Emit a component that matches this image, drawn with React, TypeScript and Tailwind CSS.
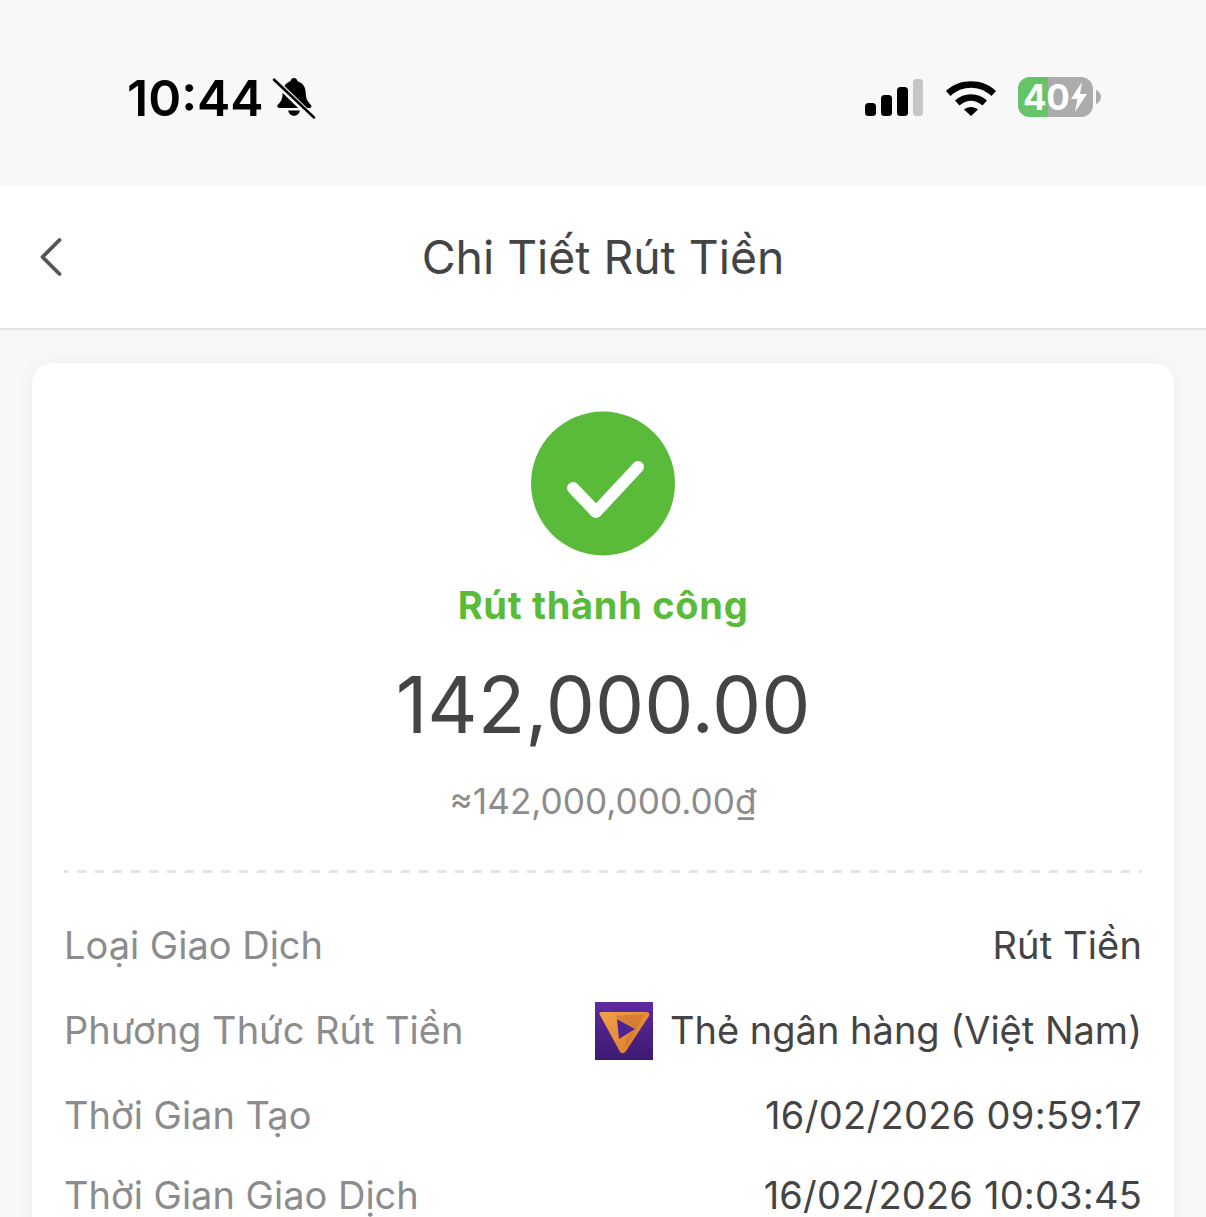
import React from 'react';
import { ChevronLeft } from 'lucide-react';

const rows = [
  { label: 'Loại Giao Dịch', value: 'Rút Tiền', height: 'h-[85px]', tracking: 'tracking-[0.15px]' },
  { label: 'Phương Thức Rút Tiền', value: 'Thẻ ngân hàng (Việt Nam)', logo: true, height: 'h-[85px]', tracking: 'tracking-normal' },
  { label: 'Thời Gian Tạo', value: '16/02/2026 09:59:17', height: 'h-[85px]', tracking: 'tracking-[0.3px]' },
  { label: 'Thời Gian Giao Dịch', value: '16/02/2026 10:03:45', height: 'h-[75px]', tracking: 'tracking-[0.2px]' },
];

const BellOff = () => (
  <svg width="44" height="44" viewBox="0 0 42 42" className="ml-[8px]">
    <path d="M21 2c2 0 3 1.300 3.400 3 5 1.500 7.600 5.600 7.800 11 .2 5 1 7.400 4.800 11.500 1 1.100 1 3-1 3H7c-2 0-2.400-2-1.400-3 3.400-3.400 4.400-6 4.600-11.500C10.400 10.600 13 6.500 17.600 5 18 3.300 19 2 21 2z" fill="#000" />
    <path d="M15.500 33h11c-.4 3-2.700 5-5.500 5s-5.100-2-5.500-5z" fill="#000" />
    <path d="M3 5l36 35" stroke="#f8f8f8" strokeWidth="6" />
    <path d="M2 3.500l38 36" stroke="#000" strokeWidth="2.600" strokeLinecap="round" />
  </svg>
);

const Signal = () => (
  <svg width="60" height="38" viewBox="0 0 60 38">
    <rect x="1" y="25" width="11" height="13" rx="3.500" fill="#000" />
    <rect x="17" y="17" width="11" height="21" rx="3.500" fill="#000" />
    <rect x="33" y="9" width="11" height="29" rx="3.500" fill="#000" />
    <rect x="49" y="1" width="10" height="37" rx="3.500" fill="#c6c6c6" />
  </svg>
);

const Wifi = () => (
  <svg width="52" height="38" viewBox="0 0 52 38">
    <path d="M1 13C14 0 38 0 51 13l-4.500 5C35 7 17 7 5.500 18z" fill="#000" />
    <path d="M10 22.500C19 14 33 14 42 22.500l-4.500 5C30.500 21 21.500 21 14.500 27.500z" fill="#000" />
    <path d="M19 31.500c4-3.500 10-3.500 14 0L26 38z" fill="#000" />
  </svg>
);

const Battery = () => (
  <div className="flex items-center">
    <div className="relative flex h-[40px] w-[75px] items-center overflow-hidden rounded-[12px] bg-[#acacac]">
      <div className="absolute inset-y-0 left-0 w-[30px] bg-[#65c466]" />
      <span className="relative ml-[5px] text-[35px] leading-none font-bold tracking-[-0.5px] text-white">40</span>
      <svg width="18" height="32" viewBox="0 0 18 32" className="relative ml-[1px] shrink-0">
        <path d="M12 1L1 18h6.500L5 31l12-18h-7z" fill="#fff" />
      </svg>
    </div>
    <svg width="5" height="14" viewBox="0 0 5 14" className="ml-[3px]">
      <path d="M0 0c3 1 5 4 5 7s-2 6-5 7z" fill="#acacac" />
    </svg>
  </div>
);

const BankLogo = () => (
  <svg width="58" height="58" viewBox="0 0 58 58" className="mr-[17px] shrink-0">
    <defs>
      <linearGradient id="bg" x1="0" y1="0" x2="0" y2="1">
        <stop offset="0" stopColor="#5e2aa0" />
        <stop offset="1" stopColor="#3d1a70" />
      </linearGradient>
      <linearGradient id="wing" x1="0" y1="0" x2="1" y2="1">
        <stop offset="0" stopColor="#f2a24b" />
        <stop offset="1" stopColor="#d97a2c" />
      </linearGradient>
    </defs>
    <rect width="58" height="58" fill="url(#bg)" />
    <path d="M5 13c-1.500-2 0-3 2-3h44c3 0 4 2 3 4L31 49c-2 3-5 3-6.500 0z" fill="url(#wing)" />
    <path d="M20 14l30-2-19 33 0-8 9-10z" fill="#c96f28" opacity="0.55" />
    <path d="M22 17l18 10-16 10z" fill="#4d2390" />
  </svg>
);

export default function App() {
  return (
    <div className="h-[1217px] w-[1206px] overflow-hidden bg-[#f8f8f8] font-['Inter','Noto_Sans',sans-serif]">
      <div className="flex h-[186px] items-center justify-between pt-[10px] pr-[105px] pl-[127px]">
        <div className="flex items-center">
          <span className="text-[50px] leading-none font-semibold text-black">10:44</span>
          <BellOff />
        </div>
        <div className="mb-[2px] flex items-center gap-[21px]">
          <Signal />
          <Wifi />
          <Battery />
        </div>
      </div>

      <div className="relative flex h-[144px] items-center justify-center border-b-2 border-[#e4e4e4] bg-white">
        <ChevronLeft className="absolute top-[37px] left-[17px] text-[#555555]" size={68} strokeWidth={1.35} />
        <h1 className="pt-[2px] text-[46.300px] font-normal text-[#444444]">Chi Tiết Rút Tiền</h1>
      </div>

      <div className="mx-[32px] mt-[33px] h-[900px] rounded-[20px] bg-white px-[32px] pt-[48px] shadow-[0_0_16px_rgba(0,0,0,0.05)]">
        <div className="flex flex-col items-center pb-[47px]">
          <svg width="144" height="145" viewBox="0 0 144 145">
            <circle cx="72" cy="72.500" r="72" fill="#59bb39" />
            <path d="M42 77l23 24 42-45" fill="none" stroke="#fff" strokeWidth="12" strokeLinecap="round" strokeLinejoin="round" />
          </svg>
          <p className="mt-[25px] text-[38px] leading-[48px] font-bold tracking-[0.7px] text-[#59bb39]">Rút thành công</p>
          <p className="mt-[28px] text-[78px] leading-[96px] font-normal text-[#444444]">142,000.00</p>
          <p className="mt-[26px] text-[35.200px] leading-[44px] text-[#8c8c8c]">≈142,000,000.00₫</p>
        </div>
        <div className="h-[3px] bg-[repeating-linear-gradient(90deg,#e4e4e4_0_4px,transparent_4px_13px,#e4e4e4_13px_18px)]" />
        <div className="pt-[30px]">
          {rows.map((row) => (
            <div key={row.label} className={`flex items-center justify-between text-[38px] ${row.height}`}>
              <span className="text-[#8c8c8c]">{row.label}</span>
              <span className={`flex items-center text-[#444444] ${row.tracking}`}>
                {row.logo && <BankLogo />}
                {row.value}
              </span>
            </div>
          ))}
        </div>
      </div>
    </div>
  );
}
